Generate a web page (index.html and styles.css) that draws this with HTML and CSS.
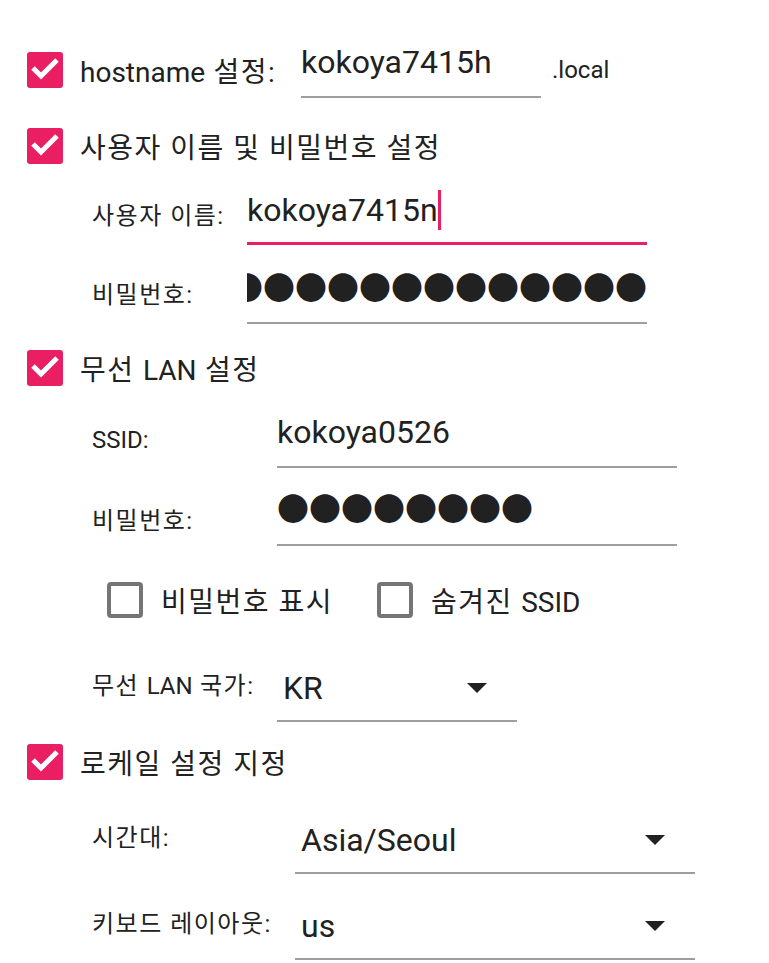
FILE: index.html
```html
<!DOCTYPE html>
<html lang="ko">
<head>
  <meta charset="UTF-8" />
  <meta name="viewport" content="width=device-width, initial-scale=1.0"/>
  <title>고급 옵션</title>
  <link rel="stylesheet" href="styles.css">
</head>
<body>
  <div class="page">

    <!-- hostname -->
    <div class="row">
      <span class="checkbox checked">
        <svg width="36" height="36" viewBox="0 0 36 36"><polyline points="6,16 14,24 30,8" /></svg>
      </span>
      <span class="check-label host-label"><span class="latin">hostname</span> 설정:</span>
      <div class="field host-field">kokoya7415h</div>
      <span class="suffix">.local</span>
    </div>

    <!-- user / password -->
    <div class="row section-head user-head">
      <span class="checkbox checked">
        <svg width="36" height="36" viewBox="0 0 36 36"><polyline points="6,16 14,24 30,8" /></svg>
      </span>
      <span class="check-label">사용자 이름 및 비밀번호 설정</span>
    </div>

    <div class="form user-form">
      <div class="form-row">
        <span class="field-label">사용자 이름:</span>
        <div class="field focused">kokoya7415n<span class="caret"></span></div>
      </div>
      <div class="form-row">
        <span class="field-label">비밀번호:</span>
        <div class="field password clipped"><span>●●●●●●●●●●●●●</span></div>
      </div>
    </div>

    <!-- wireless LAN -->
    <div class="row section-head wifi-head">
      <span class="checkbox checked">
        <svg width="36" height="36" viewBox="0 0 36 36"><polyline points="6,16 14,24 30,8" /></svg>
      </span>
      <span class="check-label">무선 <span class="latin">LAN</span> 설정</span>
    </div>

    <div class="form wifi-form">
      <div class="form-row">
        <span class="field-label"><span class="latin">SSID:</span></span>
        <div class="field">kokoya0526</div>
      </div>
      <div class="form-row">
        <span class="field-label">비밀번호:</span>
        <div class="field password">●●●●●●●●</div>
      </div>

      <div class="options">
        <label class="option">
          <span class="checkbox"></span>
          <span class="check-label">비밀번호 표시</span>
        </label>
        <label class="option">
          <span class="checkbox"></span>
          <span class="check-label">숨겨진 <span class="latin">SSID</span></span>
        </label>
      </div>

      <div class="form-row combo-row">
        <span class="field-label">무선 <span class="latin">LAN</span> 국가:</span>
        <div class="combo country-combo">
          <div class="combo-line">
            <span class="combo-text">KR</span>
            <svg class="arrow" width="20" height="10" viewBox="0 0 20 10"><polygon points="0,0 20,0 10,10" /></svg>
          </div>
        </div>
      </div>
    </div>

    <!-- locale -->
    <div class="row section-head locale-head">
      <span class="checkbox checked">
        <svg width="36" height="36" viewBox="0 0 36 36"><polyline points="6,16 14,24 30,8" /></svg>
      </span>
      <span class="check-label">로케일 설정 지정</span>
    </div>

    <div class="form locale-form">
      <div class="form-row combo-row">
        <span class="field-label">시간대:</span>
        <div class="combo">
          <div class="combo-line">
            <span class="combo-text">Asia/Seoul</span>
            <svg class="arrow" width="20" height="10" viewBox="0 0 20 10"><polygon points="0,0 20,0 10,10" /></svg>
          </div>
        </div>
      </div>
      <div class="form-row combo-row">
        <span class="field-label">키보드 레이아웃:</span>
        <div class="combo">
          <div class="combo-line">
            <span class="combo-text">us</span>
            <svg class="arrow" width="20" height="10" viewBox="0 0 20 10"><polygon points="0,0 20,0 10,10" /></svg>
          </div>
        </div>
      </div>
    </div>

  </div>
</body>
</html>
```

FILE: styles.css
```css
body {
  margin: 0;
  font-family: Roboto, "Noto Sans CJK KR", sans-serif;
  color: #212121;
  background-color: #fff;
}

.page {
  padding: 42px 0 0 27px;
}

.row {
  display: flex;
  align-items: center;
  height: 56px;
}

/* Material style check boxes */
.checkbox {
  width: 36px;
  height: 36px;
  box-sizing: border-box;
  border: 4px solid #757575;
  border-radius: 4px;
  flex-shrink: 0;
}

.checkbox.checked {
  background-color: #e91e63;
  border: none;
  border-radius: 3px;
}

.checkbox svg {
  display: block;
}

.checkbox polyline {
  fill: none;
  stroke: #fff;
  stroke-width: 5;
}

/* hangul is set a little wider than the latin runs */
.check-label {
  margin-left: 17px;
  font-size: 28px;
  letter-spacing: 1.5px;
}

.latin {
  letter-spacing: 0;
}

.host-label {
  width: 221px;
}

.suffix {
  margin-left: 11px;
  font-size: 24px;
}

.section-head {
  margin-top: 20px;
}

.wifi-head {
  margin-top: 16px;
}

.locale-head {
  margin-top: 12px;
}

/* Text fields */
.field {
  width: 400px;
  height: 56px;
  box-sizing: border-box;
  border-bottom: 2px solid #9e9e9e;
  font-size: 32px;
  line-height: 40px;
  white-space: nowrap;
}

.host-field {
  width: 240px;
}

.field.focused {
  border-bottom: 3px solid #e91e63;
}

.caret {
  display: inline-block;
  width: 3px;
  height: 40px;
  vertical-align: top;
  background-color: #e91e63;
}

.field.clipped {
  display: flex;
  justify-content: flex-end;
  overflow: hidden;
}

/* Label + field grids */
.form {
  padding-left: 65px;
}

.form-row {
  display: grid;
  align-items: center;
}

.field-label {
  font-size: 24px;
  letter-spacing: 1.5px;
}

.combo-row .field-label {
  margin-bottom: 6px;
}

.user-form {
  margin-top: 7px;
}

.user-form .form-row {
  grid-template-columns: 155px auto;
}

.user-form .field {
  height: 64px;
  padding-top: 9px;
}

.user-form .form-row + .form-row {
  margin-top: 15px;
}

.wifi-form .form-row {
  grid-template-columns: 185px auto;
  margin-top: 16px;
}

.wifi-form .form-row + .form-row {
  margin-top: 22px;
}

.wifi-form .combo-row {
  margin-top: 22px;
}

.locale-form .form-row {
  grid-template-columns: 203px auto;
  margin-top: 12px;
}

.locale-form .form-row + .form-row {
  margin-top: 14px;
}

/* Option check boxes under the wifi fields */
.options {
  display: flex;
  align-items: center;
  height: 56px;
  margin: 26px 0 0 15px;
}

.option {
  display: flex;
  align-items: center;
}

.option:first-child {
  width: 270px;
}

.option .check-label {
  margin-left: 18px;
}

/* Combo boxes */
.combo {
  width: 400px;
  height: 72px;
  box-sizing: border-box;
  padding: 18px 30px 0 6px;
  border-bottom: 2px solid #9e9e9e;
  font-size: 32px;
  line-height: 40px;
}

.country-combo {
  width: 240px;
}

.combo-line {
  display: flex;
  align-items: center;
  height: 40px;
}

.combo-text {
  flex: 1;
}

.arrow {
  display: block;
  fill: #212121;
}
```
